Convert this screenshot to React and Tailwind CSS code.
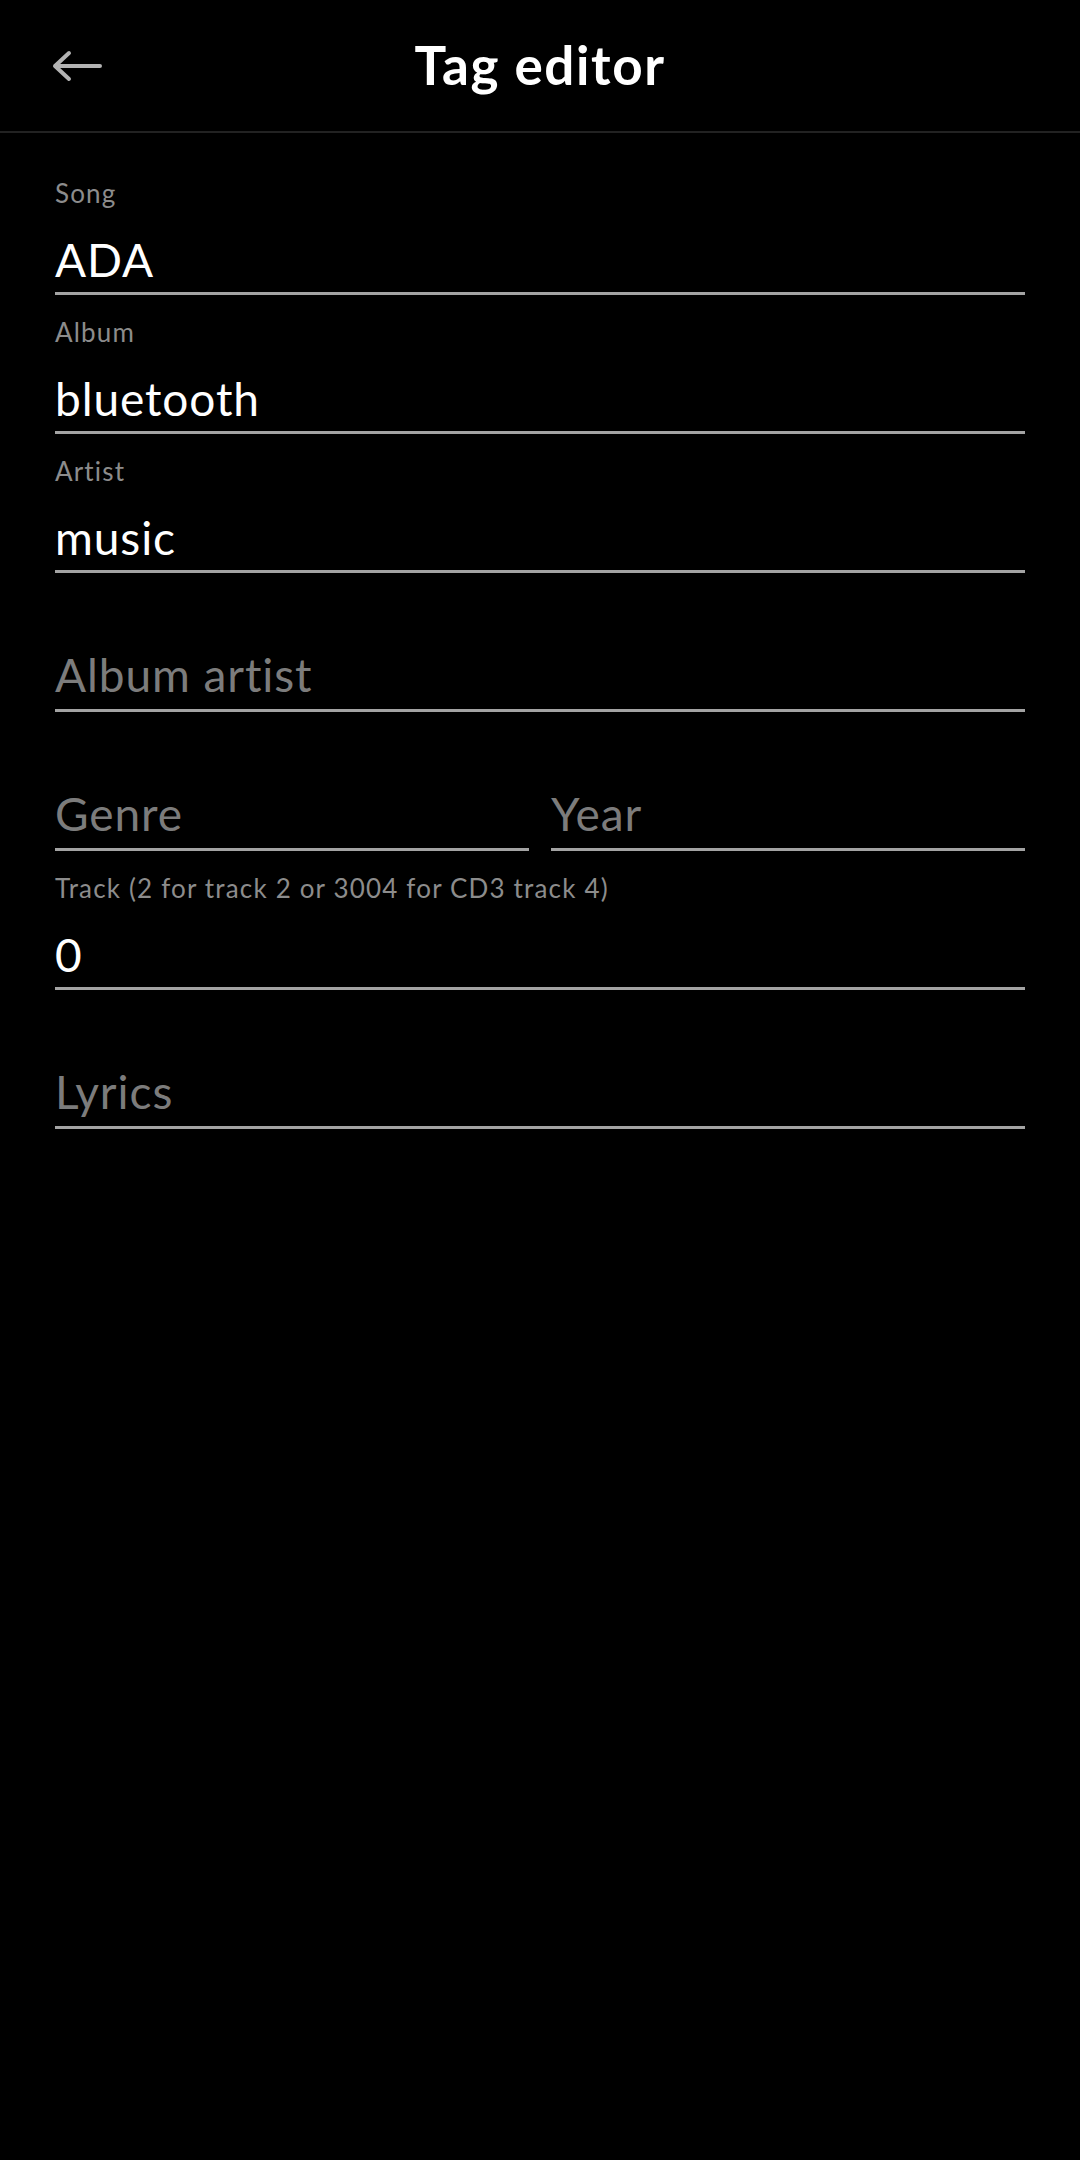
import React from 'react';

const font = { fontFamily: 'Lato, "Noto Sans", sans-serif' };

const BackArrow = () => (
    <svg width="50" height="34" viewBox="0 0 50 34" fill="none" className="block">
        <path d="M3 17 H48 M3 17 L17 4 M3 17 L17 30" stroke="#b3b3b3" strokeWidth="4" strokeLinecap="round" strokeLinejoin="round" />
    </svg>
);

// one text field: optional small label, value or placeholder, underline
const Field = ({ label, value, placeholder, first }) => (
    <div className={first ? 'flex flex-col' : 'flex flex-col pt-[16px]'}>
        {label ? (
            <>
                <div className="h-[39px] pt-[3px] text-[26px] leading-[36px] tracking-[0.045em] text-[#8c8c8c] whitespace-nowrap">{label}</div>
                <div className="mt-[21px] h-[56px] text-[46px] leading-[56px] tracking-[0.02em] text-white">{value}</div>
                <div className="mt-[4px] h-[3px] bg-[#a3a3a3]" />
            </>
        ) : (
            <>
                <div className="mt-[58px] h-[56px] text-[46px] leading-[56px] tracking-[0.02em] text-[#7c7c7c]">{placeholder}</div>
                <div className="mt-[6px] h-[3px] bg-[#a3a3a3]" />
            </>
        )}
    </div>
);

const App = () => {
    return (
        <div className="w-[1080px] min-h-[2160px] bg-black" style={font}>
            {/* Header */}
            <header className="h-[133px] flex items-center px-[52px] border-b-2 border-[#222222]">
                <BackArrow />
                <h1 className="flex-1 text-center text-white font-bold text-[53px] leading-none tracking-[0.03em] -mt-[2px]">Tag editor</h1>
                <div className="w-[50px]" />
            </header>

            {/* Form */}
            <div className="px-[55px] pt-[39px] flex flex-col">
                <Field first label="Song" value="ADA" />
                <Field label="Album" value="bluetooth" />
                <Field label="Artist" value="music" />
                <Field placeholder="Album artist" />
                <div className="grid grid-cols-2 gap-[22px]">
                    <Field placeholder="Genre" />
                    <Field placeholder="Year" />
                </div>
                <Field label="Track (2 for track 2 or 3004 for CD3 track 4)" value="0" />
                <Field placeholder="Lyrics" />
            </div>
        </div>
    );
};

export default App;
